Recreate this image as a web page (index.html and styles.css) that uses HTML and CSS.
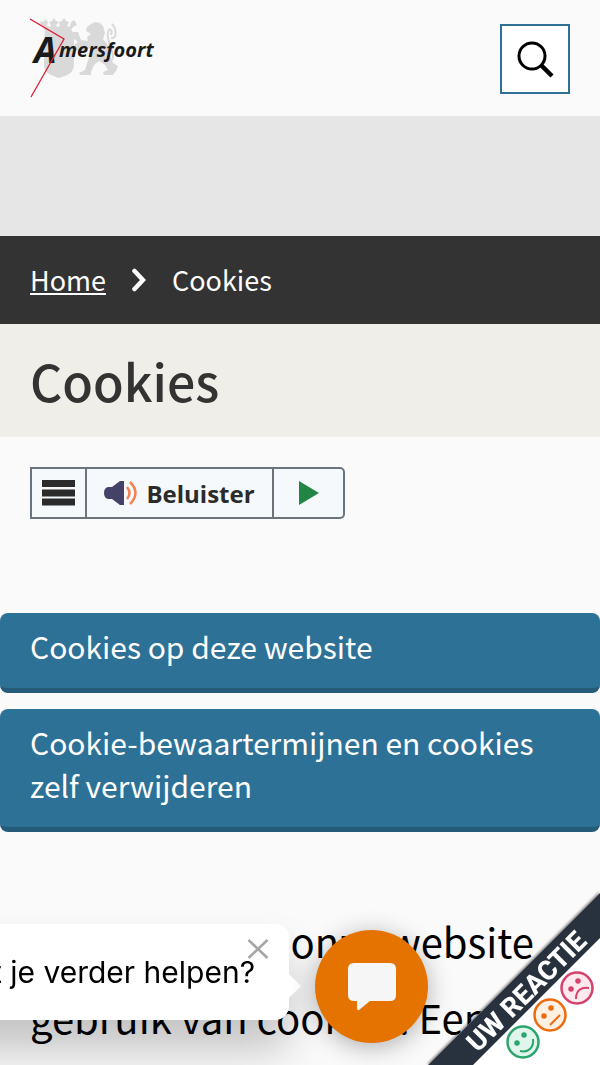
FILE: index.html
```html
<!DOCTYPE html>
<html lang="nl">
<head>
    <meta charset="UTF-8">
    <meta name="viewport" content="width=device-width, initial-scale=1.0">
    <title>Cookies - Gemeente Amersfoort</title>
    <link rel="stylesheet" href="styles.css">
</head>
<body>
    <header class="site-header">
        <a href="#" class="logo" aria-label="Amersfoort">
            <svg width="126" height="82" viewBox="0 0 126 82">
                <!-- wapen -->
                <g fill="#d9d9d9">
                    <path d="M15 10 H40 L44 16 V46 C44 56 37 57 29 60 C20 57 14 55 14 46 Z"/>
                    <path d="M13 8 L10 6 L11 3 L14 4 L15 1 L18 4 L17 8 L20 9 L21 7 L19 4 L22 3 L24 0 L26 3 L29 4 L26 7 L27 9 L30 8 L29 4 L32 3 L34 0 L36 3 L39 4 L37 8 L40 9 L41 4 L44 2 L46 5 L47 7 L43 9 L41 12 H14 Z"/>
                    <path d="M57 9 L61 6 L65 4 L70 5 L73 8 L75 15 L73 21 L78 27 L80 38 L83 45 L88 48 L86 53 L83 57 L74 57 L73 54 L78 52 L75 47 L69 43 L64 47 L61 54 L61 57 L50 57 L49 55 L55 52 L57 45 L60 38 L60 30 L50 34 L45 31 L44 27 L48 24 L43 20 L43 14 L48 14 L51 22 L58 23 L57 19 L61 16 L56 13 Z"/>
                </g>
                <path d="M80 43 C89 39 75 24 78 14 C79 9 83 12 81 17 M81 20 C88 21 86 10 82 6" fill="none" stroke="#d9d9d9" stroke-width="2"/>
                <text x="4" y="45" class="logo-initial">A</text>
                <text x="29" y="39" class="logo-text">mersfoort</text>
                <path d="M0 1 L34 21 L1 79" fill="none" stroke="#dc1d33" stroke-width="1.3"/>
            </svg>
        </a>
        <button type="button" class="search-button" aria-label="Zoeken">
            <svg width="40" height="40" viewBox="0 0 40 40" fill="none" stroke="#000">
                <circle cx="17" cy="17" r="13" stroke-width="3"/>
                <path d="M26 26 L37 37" stroke-width="4.5"/>
            </svg>
        </button>
    </header>

    <div class="banner"></div>

    <nav class="breadcrumb" aria-label="Kruimelpad">
        <a href="#">Home</a>
        <svg width="14" height="24" viewBox="0 0 14 24" fill="none" stroke="#fff" stroke-width="4.5" stroke-linecap="round">
            <path d="M2.500 3 L11 12 L2.500 21"/>
        </svg>
        <span>Cookies</span>
    </nav>

    <div class="page-title">
        <h1>Cookies</h1>
    </div>

    <main>
        <div class="readspeaker">
            <button type="button" class="rs-menu" aria-label="Menu">
                <svg width="33" height="26" viewBox="0 0 33 26" fill="#2b2b2b">
                    <path d="M0 0 H33 V7 H0 Z M0 9.500 H33 V16.500 H0 Z M0 18.500 H33 V25.500 H0 Z"/>
                </svg>
            </button>
            <button type="button" class="rs-listen">
                <svg width="34" height="26" viewBox="0 0 34 26">
                    <path d="M8 7 L16 1 H20 V25 H16 L8 19 H4 Q0 18 0 13 Q0 8 4 7 Z" fill="#45426a"/>
                    <path d="M23 7 Q28 13 23 19 M26 2 Q37 13 26 24" fill="none" stroke="#f5814f" stroke-width="2.500"/>
                </svg>
                <span>Beluister</span>
            </button>
            <button type="button" class="rs-play" aria-label="Afspelen">
                <svg width="20" height="24" viewBox="0 0 20 24">
                    <path d="M0 0 L20 12 L0 24 Z" fill="#218544"/>
                </svg>
            </button>
        </div>

        <ul class="link-list">
            <li><a href="#">Cookies op deze website</a></li>
            <li><a href="#">Cookie-bewaartermijnen en cookies zelf verwijderen</a></li>
        </ul>

        <p class="intro">Wij maken op onze website gebruik van cookies. Een</p>
    </main>

    <!-- chat -->
    <div class="chat-message">
        <span>Kan de chatbot je verder helpen?</span>
        <button type="button" class="chat-close" aria-label="Sluiten">
            <svg width="22" height="20" viewBox="0 0 22 20" fill="none" stroke="#a6a6a6" stroke-width="2.500">
                <path d="M1.500 1 L20.500 19 M20.500 1 L1.500 19"/>
            </svg>
        </button>
    </div>
    <button type="button" class="chat-button" aria-label="Chat">
        <svg width="48" height="48" viewBox="0 0 48 48">
            <path d="M6 0 H42 Q48 0 48 6 V32 Q48 38 42 38 H22 L11 47 Q9 48 9 45 V38 H6 Q0 38 0 32 V6 Q0 0 6 0 Z" fill="#f6f6f6"/>
        </svg>
    </button>

    <!-- feedback -->
    <a href="#" class="feedback" aria-label="Uw reactie">
        <svg width="172" height="172" viewBox="0 0 172 172">
            <path d="M172 0 V172 H0 Z" fill="#fff"/>
            <path d="M172 0 V45 L45 172 H0 Z" fill="#27323e"/>
            <text x="0" y="0" transform="translate(105 105) rotate(-45)" class="feedback-text">UW REACTIE</text>
            <g fill="#fde9ee" stroke="#d5426b" stroke-width="2.5">
                <circle cx="149" cy="95" r="15.500"/>
                <circle cx="143" cy="96" r="1.500" fill="#d5426b"/><circle cx="150" cy="88" r="1.500" fill="#d5426b"/>
                <path d="M148 106 C148 97 153 94 161 95" fill="none" stroke-width="2"/>
            </g>
            <g fill="#fff0e4" stroke="#ec6b0c" stroke-width="2.5">
                <circle cx="122" cy="122" r="15.500"/>
                <circle cx="116" cy="123" r="1.500" fill="#ec6b0c"/><circle cx="123" cy="115" r="1.500" fill="#ec6b0c"/>
                <path d="M122 132 L132 122" fill="none" stroke-width="2"/>
            </g>
            <g fill="#e0f5eb" stroke="#2ba56d" stroke-width="2.5">
                <circle cx="95" cy="149" r="15.500"/>
                <circle cx="89" cy="150" r="1.500" fill="#2ba56d"/><circle cx="96" cy="142" r="1.500" fill="#2ba56d"/>
                <path d="M92 158 C101 160 106 154 105 146" fill="none" stroke-width="2"/>
            </g>
        </svg>
    </a>
</body>
</html>
```
FILE: styles.css
```css
* {
    box-sizing: border-box;
}

body {
    margin: 0;
    background-color: #fafafa;
    color: #000;
    font-family: "Noto Sans CJK SC", "Open Sans", sans-serif;
    overflow-x: hidden;
}

button {
    padding: 0;
    border: none;
    cursor: pointer;
}

svg {
    display: block;
}

.site-header {
    display: flex;
    justify-content: space-between;
    align-items: center;
    height: 116px;
    padding: 2px 30px 0;
}

.logo-initial,
.logo-text {
    font-family: "Open Sans", sans-serif;
    font-weight: bold;
    font-style: italic;
    fill: #1a1a1a;
}

.logo-initial {
    font-size: 36px;
}

.logo-text {
    font-size: 20px;
}

.search-button {
    display: flex;
    justify-content: center;
    align-items: center;
    width: 70px;
    height: 70px;
    border: 2px solid #2d7196;
    background: #fff;
}

.banner {
    height: 120px;
    background-color: #e6e6e6;
}

.breadcrumb {
    display: flex;
    align-items: center;
    gap: 26px;
    height: 88px;
    padding: 0 30px;
    background-color: #333;
    color: #fff;
    font-size: 27px;
    line-height: 40px;
}

.breadcrumb a {
    color: #fff;
}

.page-title {
    padding: 24px 30px;
    background-color: #efeee8;
}

.page-title h1 {
    margin: 0;
    color: #333;
    font-size: 50px;
    font-weight: 500;
    line-height: 65px;
}

.readspeaker {
    display: flex;
    width: max-content;
    height: 52px;
    margin: 30px 30px 94px;
    border: 2px solid #6b747c;
    border-radius: 0 5px 5px 0;
    background-color: #f5f9fc;
}

.readspeaker button {
    display: flex;
    justify-content: center;
    align-items: center;
    background: none;
}

.readspeaker button + button {
    border-left: 2px solid #6b747c;
}

.rs-menu {
    width: 53px;
}

.rs-listen {
    gap: 8px;
    width: 187px;
    color: #2b2b2b;
    font-family: "Open Sans", sans-serif;
    font-size: 24px;
    font-weight: bold;
}

.rs-play {
    width: 71px;
}

.link-list {
    display: grid;
    gap: 16px;
    margin: 0;
    padding: 0;
    list-style: none;
}

.link-list a {
    display: block;
    padding: 12px 30px 20px;
    border-bottom: 5px solid #255b79;
    border-radius: 8px;
    background-color: #2d7196;
    color: #fff;
    font-size: 30px;
    line-height: 43px;
    text-decoration: none;
}

.intro {
    margin: 71px 30px 0;
    font-size: 40px;
    line-height: 76px;
}

.chat-message {
    position: fixed;
    right: 311px;
    bottom: 45px;
    padding: 28px 34px 28px 30px;
    border-radius: 14px;
    background-color: #fff;
    box-shadow: 0 30px 44px rgba(0, 0, 0, 0.22);
    font-family: Inter, sans-serif;
    font-size: 30px;
    line-height: 40px;
    white-space: nowrap;
}

.chat-message::after {
    content: "";
    position: absolute;
    top: 50px;
    right: -12px;
    border: 12px solid transparent;
    border-right-width: 0;
    border-left-color: #fff;
}

.chat-close {
    position: absolute;
    top: 15px;
    right: 20px;
    background: none;
}

.chat-button {
    position: fixed;
    right: 172px;
    bottom: 22px;
    display: flex;
    justify-content: center;
    align-items: center;
    width: 113px;
    height: 113px;
    border-radius: 50%;
    background-color: #e57300;
    box-shadow: 0 4px 24px rgba(0, 0, 0, 0.3);
}

.feedback {
    position: fixed;
    right: 0;
    bottom: 0;
    filter: drop-shadow(-1px -1px 1px rgba(0, 0, 0, 0.4));
}

.feedback-text {
    font-family: Roboto, sans-serif;
    font-size: 27px;
    font-weight: 800;
    fill: #fff;
    text-anchor: middle;
}
```
